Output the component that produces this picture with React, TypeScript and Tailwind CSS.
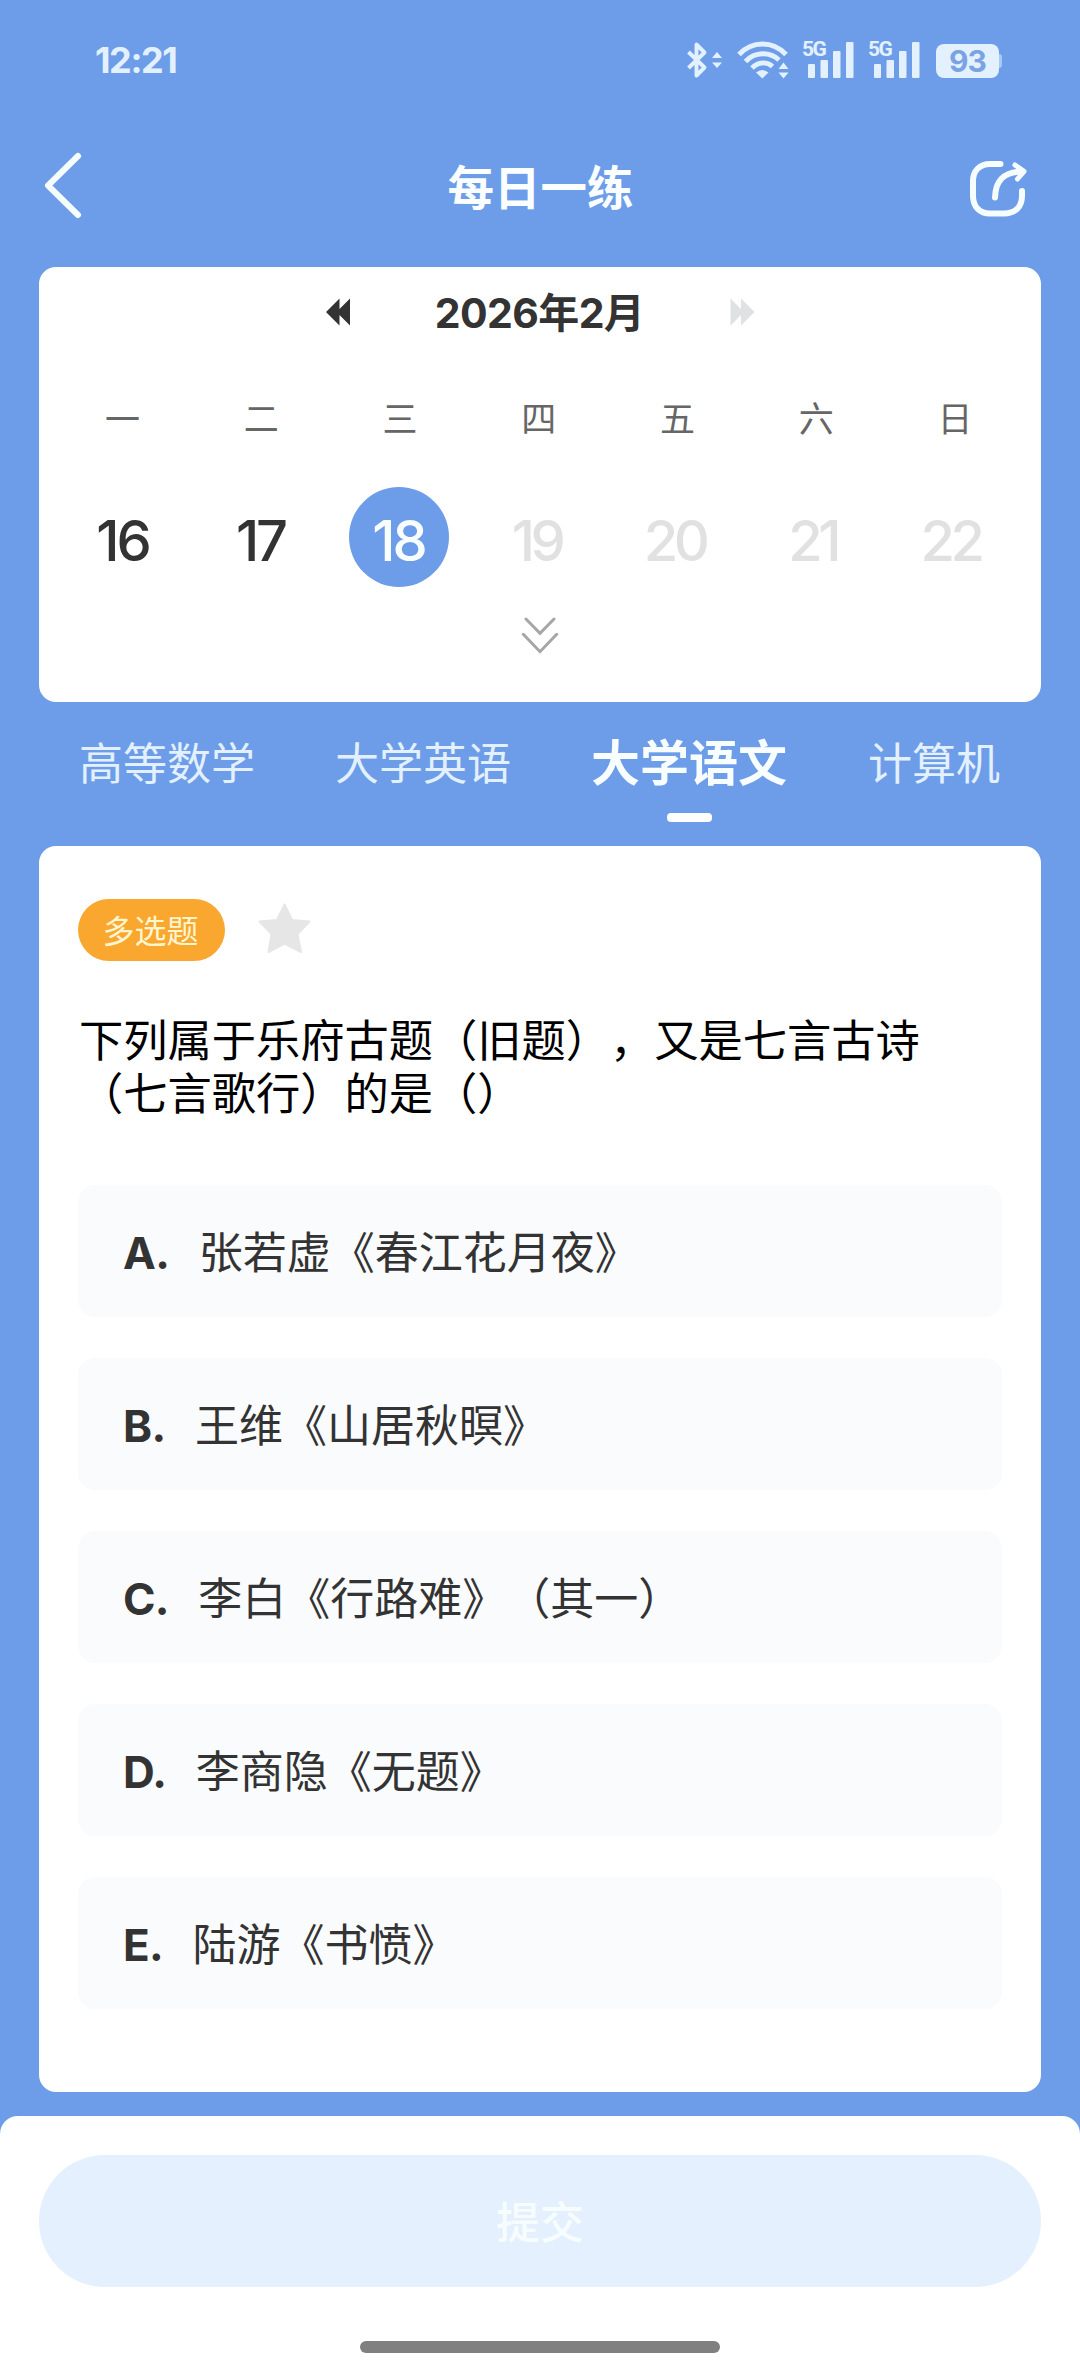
import React from "react";

const week = ["一", "二", "三", "四", "五", "六", "日"];
const days = ["16", "17", "18", "19", "20", "21", "22"];
const options = [
  { key: "A.", text: "张若虚《春江花月夜》" },
  { key: "B.", text: "王维《山居秋暝》" },
  { key: "C.", text: "李白《行路难》（其一）" },
  { key: "D.", text: "李商隐《无题》" },
  { key: "E.", text: "陆游《书愤》" },
];

function Signal() {
  return (
    <div className="relative h-[38px] w-[52px]">
      <span className="absolute top-[-3px] left-0 font-[Roboto,sans-serif] text-[21px] leading-[22px] font-bold tracking-[-1.500px]">5G</span>
      <svg width="52" height="38" viewBox="0 0 52 38" fill="#e3f1ff">
        <rect x="6" y="23" width="7" height="14" rx="1" />
        <rect x="18.5" y="19" width="7.500" height="18" rx="1" />
        <rect x="31" y="10" width="7.500" height="27" rx="1" />
        <rect x="44" y="1" width="7.500" height="36" rx="1" />
      </svg>
    </div>
  );
}

function StatusBar() {
  return (
    <div className="flex h-[120px] items-start justify-between pl-[95px] pr-[78px] text-[#e3f1ff]">
      <div className="mt-[38px] text-[36px] leading-[44px] font-bold tracking-[-1.400px]">12:21</div>
      <div className="mt-[41px] flex items-start">
        <svg width="36" height="38" viewBox="0 0 36 38" fill="none" stroke="#e3f1ff" strokeWidth="3.9" strokeLinejoin="round">
          <path d="M1.500 11L17.500 26.500L9.500 34.500V3.500L17.500 11.500L1.500 27" />
          <path d="M25 17L30 11L35 17ZM25 21.500L30 27L35 21.500Z" fill="#e3f1ff" stroke="none" />
        </svg>
        <svg className="ml-[14px]" width="52" height="38" viewBox="0 0 52 38" fill="none" stroke="#e3f1ff" strokeWidth="4.900">
          <path d="M2 13.500C15 -0.500 36 -0.500 49 13.500" />
          <path d="M8.500 20.500C18 10.500 33 10.500 42 19" />
          <path d="M15 27C21 20.500 30 20.500 35.500 25.500" />
          <path d="M19 31.500Q25 26.500 31.500 31.500L25.300 37.500Z" fill="#e3f1ff" stroke="none" />
          <path d="M41.500 28L46.500 21.500L51.500 28ZM41.500 31.500L46.500 37.500L51.500 31.500Z" fill="#e3f1ff" stroke="none" />
        </svg>
        <div className="ml-[13px] flex gap-[14px]">
          <Signal />
          <Signal />
        </div>
        <div className="ml-[16px] mt-[3px] flex items-center">
          <div className="flex h-[34px] w-[63px] items-center justify-center rounded-[8px] bg-[#e3f1ff] text-[30px] font-bold tracking-[-1px] text-[#7ba3e4]">93</div>
          <div className="h-[14px] w-[3px] rounded-r bg-[#a9c8f4]" />
        </div>
      </div>
    </div>
  );
}

function Header() {
  return (
    <div className="flex h-[147px] items-start justify-between pl-[43px] pr-[40px]">
      <svg className="mt-[30px]" width="40" height="70" viewBox="0 0 40 70" fill="none" stroke="#f6fdff" strokeWidth="6" strokeLinecap="round" strokeLinejoin="round">
        <path d="M35 6L5 35.500L35 65" />
      </svg>
      <h1 className="mt-[38px] ml-[38px] text-[46.500px] leading-[60px] font-bold text-[#fbfeff]">每日一练</h1>
      <svg className="mt-[30px]" width="80" height="80" viewBox="0 0 80 80" fill="none" stroke="#f6fdff" strokeWidth="6" strokeLinecap="round">
        <path d="M40.500 14H30C19.500 14 13 21 13 31V46C13 57 20 63.500 30 63.500H44C55 63.500 62 57 62 46V41" />
        <path d="M35 47.500C35.500 31 43 22.500 60 21.500" />
        <path d="M55 15L64 21.300L57.500 29" strokeWidth="5" strokeLinejoin="round" />
      </svg>
    </div>
  );
}

function Calendar() {
  return (
    <section className="mx-[39px] h-[435px] rounded-[17px] bg-white">
      <div className="flex items-center justify-center pt-[15px] pl-px">
        <svg width="25" height="28" viewBox="0 0 25 28" fill="#333333">
          <path d="M0 14L13.500 0.500V11L24 0.500V27.500L13.500 17V27.500Z" />
        </svg>
        <h2 className="w-[379px] pt-[3px] pr-[2px] text-center text-[41px] leading-[57px] font-bold tracking-[-0.600px] text-[#333333]">2026年2月</h2>
        <svg width="25" height="28" viewBox="0 0 25 28" fill="#dfe2e2">
          <path d="M24.500 14L11 0.500V11L0.500 0.500V27.500L11 17V27.500Z" />
        </svg>
      </div>
      <div className="mt-[52px] mr-[16.500px] ml-[14px] grid grid-cols-7 text-center text-[35px] leading-[50px] text-[#666666]">
        {week.map((d) => (
          <div key={d}>{d}</div>
        ))}
      </div>
      <div className="mt-[43px] mr-[21.500px] ml-[14.500px] grid grid-cols-7 text-[56px] font-medium">
        {days.map((d, i) => (
          <div
            key={d}
            className={
              i === 2
                ? "mx-auto flex h-[100px] w-[100px] items-center justify-center rounded-full bg-[#6d9de8] pt-[7px] tracking-[-3px] text-[#f8fdff]"
                : i < 2
                  ? "mx-auto flex h-[100px] w-[100px] items-center justify-center pt-[7px] tracking-[-3px] text-[#333333]"
                  : "mx-auto flex h-[100px] w-[100px] items-center justify-center pt-[7px] tracking-[-4.500px] text-[#e1e1e1]"
            }
          >
            {d}
          </div>
        ))}
      </div>
      <svg className="mx-auto mt-[30px]" width="38" height="38" viewBox="0 0 38 38" fill="none" stroke="#a6a6a6" strokeWidth="3" strokeLinecap="round">
        <path d="M5 2L19 16.300L33 2M2.300 17.300L19 34.700L35.700 17.300" />
      </svg>
    </section>
  );
}

function Tabs() {
  return (
    <nav className="flex h-[144px] items-start gap-[80px] pl-[79px] pt-[32px] text-[44px] leading-[60px] whitespace-nowrap text-[#e2f0ff]">
      <div>高等数学</div>
      <div>大学英语</div>
      <div className="flex flex-col items-center text-[49px] font-bold text-[#f8fdff]">
        大学语文
        <span className="mt-[19px] h-[9px] w-[45px] rounded-[4px] bg-white" />
      </div>
      <div className="pl-px">计算机</div>
    </nav>
  );
}

function Question() {
  return (
    <section className="mx-[39px] h-[1246px] rounded-[17px] bg-white px-[39px] pt-[53px]">
      <div className="flex items-start">
        <span className="flex h-[62px] w-[147px] items-center justify-center rounded-full bg-[#f9a72f] pt-[3px] pr-[2px] text-[32px] text-[#fff6cf]">多选题</span>
        <svg className="mt-[4px] ml-[33px]" width="53" height="50" viewBox="0 0 53 50" fill="#e6e6e6" stroke="#e6e6e6" strokeWidth="2" strokeLinejoin="round">
          <path d="M26.500 1.500L34 17L51.500 18.500L39.500 31L43 49L26.500 40.500L10.500 49L13.500 31L1.500 18.500L19 17Z" />
        </svg>
      </div>
      <p className="mt-[54px] ml-px text-[44.250px] leading-[52.500px] whitespace-pre text-black">{"下列属于乐府古题（旧题），又是七言古诗\n（七言歌行）的是（）"}</p>
      <div className="mt-[65px] flex flex-col gap-[41px]">
        {options.map((o) => (
          <div key={o.key} className="flex h-[132px] items-center gap-[29.500px] rounded-[17px] bg-[#fafbfd] pt-[3px] pl-[45px] text-[44px] text-[#333333]">
            <span className="font-bold tracking-[-0.700px]">{o.key}</span>
            <span>{o.text}</span>
          </div>
        ))}
      </div>
    </section>
  );
}

export default function App() {
  return (
    <main className="flex h-[2374px] w-[1080px] flex-col overflow-hidden bg-[#6d9de8] font-['Inter','Noto_Sans_CJK_SC',sans-serif] [text-spacing-trim:space-all]" lang="zh-CN">
      <StatusBar />
      <Header />
      <Calendar />
      <Tabs />
      <Question />
      <footer className="mt-[24px] flex flex-1 flex-col items-center rounded-t-[18px] bg-white pt-[39px]">
        <button className="h-[132px] w-[1002px] rounded-full bg-[#e4f0fd] pt-[4px] text-[44px] font-medium text-[#f7fdff]">提交</button>
        <div className="mt-[54px] h-[12px] w-[360px] rounded-full bg-[#808080]" />
      </footer>
    </main>
  );
}
